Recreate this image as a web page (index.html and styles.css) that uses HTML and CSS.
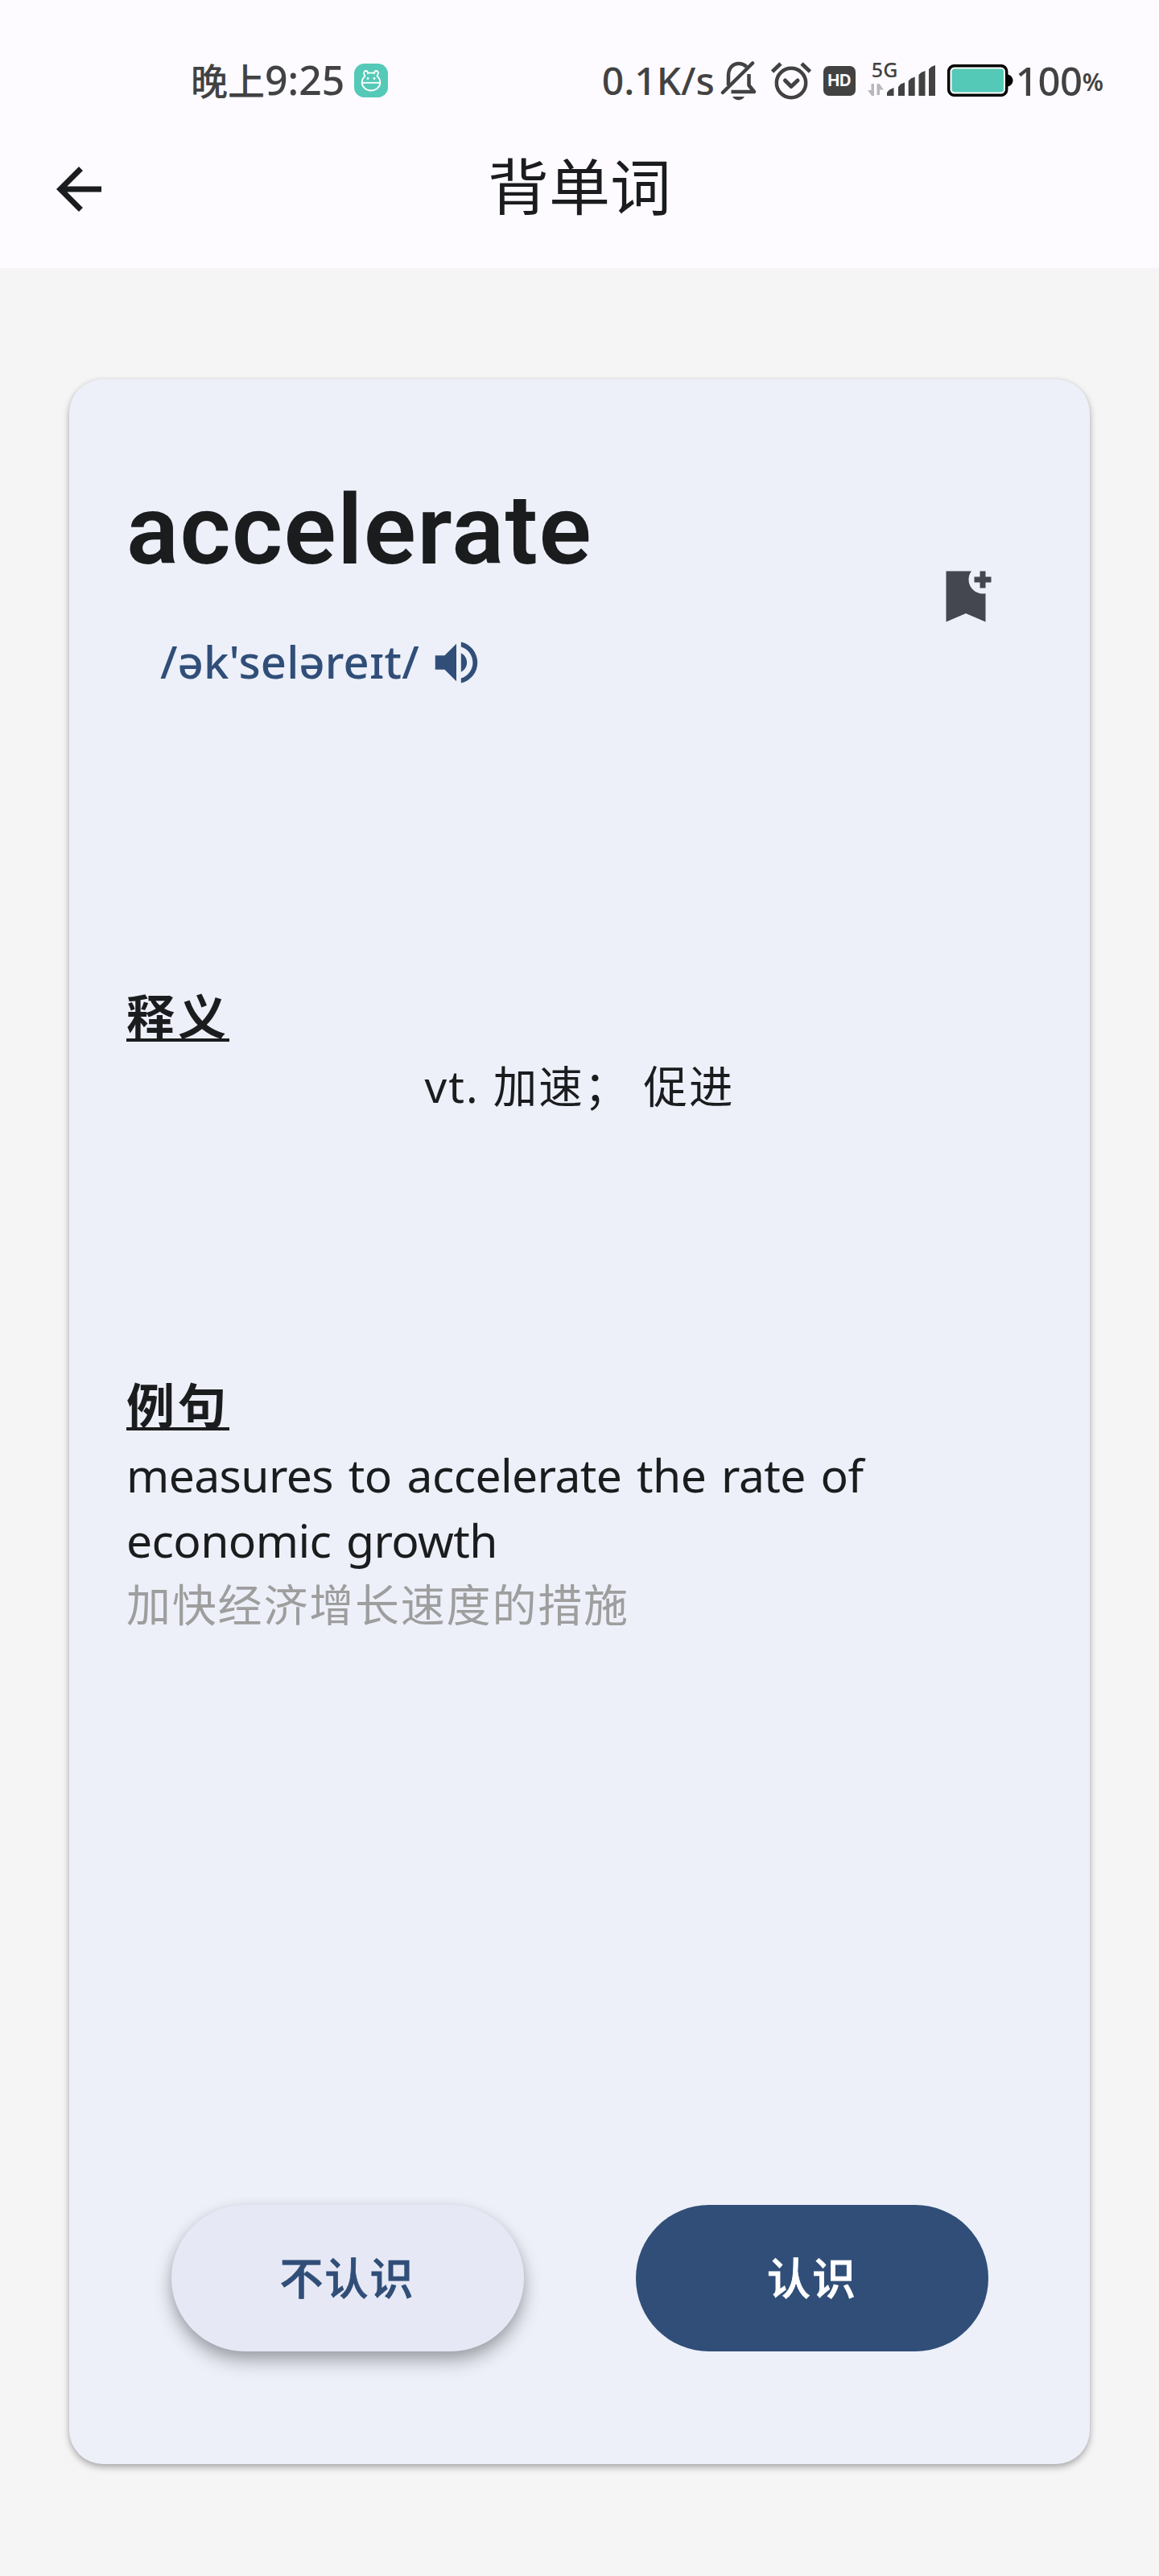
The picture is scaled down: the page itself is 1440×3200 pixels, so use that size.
FILE: index.html
```html
<!DOCTYPE html>
<html lang="zh-CN">
<head>
<meta charset="utf-8">
<title>背单词</title>
<link rel="stylesheet" href="styles.css">
</head>
<body>
<header class="top">
  <div class="status">
    <div class="status-left">
      <span class="clock">晚上<span class="digits">9:25</span></span>
      <svg class="face" viewBox="0 0 42 42"><rect width="42" height="42" rx="12.500" fill="#55c9b7"/><g fill="none" stroke="#fff" stroke-width="1.800"><path d="M13.500 15.500C11 12 12 9 14.500 9c1.800 0 2.500 1.500 2.500 3 2.500-.8 5.500-.8 8 0 0-1.500.7-3 2.500-3 2.500 0 3.500 3 1 6.500 2.500 2.200 3.800 5 3.800 8C32.300 29 27 33.500 21 33.500S9.700 29 9.700 23.500c0-3 1.300-5.800 3.800-8z"/><path d="M10 23.800h22"/></g><circle cx="17" cy="18.500" r="1.400" fill="#fff"/><circle cx="25" cy="18.500" r="1.400" fill="#fff"/></svg>
    </div>
    <div class="status-right">
      <span class="speed">0.1K/s</span>
      <svg class="bell" viewBox="0 0 46 50"><g fill="none" stroke="#424242" stroke-width="4.500"><path d="M10 31V19C10 10 15 4 23 4c4 0 7 1.500 9.500 4"/><path d="M35.500 17v14l6.500 8H13.500" stroke-linejoin="round"/><path d="M3 40 40 3.500" stroke-linecap="round"/></g><path d="M15 45h15c-2 3-4.500 4.200-7.500 4.200S17 48 15 45z" fill="#424242"/></svg>
      <svg class="alarm" viewBox="0 0 52 48"><g fill="none" stroke="#424242" stroke-width="4.500"><circle cx="26" cy="27" r="18.200"/><path d="m18.500 24 7.500 7.500 8-7.500" stroke-width="5" stroke-linecap="round" stroke-linejoin="round"/><path d="M2.500 13 13 3M49.500 13 39 3" stroke-width="4.800"/></g></svg>
      <span class="hd">HD</span>
      <div class="signal">
        <div class="net"><span class="gen">5G</span>
        <svg class="arrows" viewBox="0 0 20 15" fill="#b8b8bb"><path d="M4.500 0H8v15H5L0 8h4.500zM11.500 0h3l5.500 7.500h-5V14h-3.500z"/></svg></div>
        <svg class="bars" viewBox="0 0 60 38" fill="#424242"><path d="M0 34l3-3.500L8.500 28v10H0zM14 27l3-3.500 5-2V38h-8zM26.700 19.500l3-3 5-2V38h-8zM39.500 12l3-3 5-2V38h-8zM52 5l3-3 5-2v38h-8z"/></svg>
      </div>
      <svg class="battery" viewBox="0 0 82 40"><path d="M74 12.500c4 0 7.500 3.500 7.500 7.500s-3.500 7.500-7.500 7.500z"/><rect x="1.700" y="1.700" width="72" height="36.600" rx="7" fill="#fff" stroke="#000" stroke-width="3.500"/><rect x="5.500" y="5.500" width="64.500" height="29" rx="4" fill="#55c9b7"/></svg>
      <span class="level">100</span><span class="percent">%</span>
    </div>
  </div>
  <nav class="bar">
    <svg class="back" viewBox="0 0 24 24" fill="#1b1c1e"><path d="M20 11H7.830l5.590-5.590L12 4l-8 8 8 8 1.410-1.410L7.830 13H20z"/></svg>
    <h1 class="title">背单词</h1>
  </nav>
</header>
<main class="card">
  <section class="head">
    <div class="entry">
      <h2 class="word">accelerate</h2>
      <div class="phonetic"><span class="ipa">/ək'seləreɪt/</span>
      <svg class="speaker" viewBox="0 0 24 24" fill="#304e78"><path d="M3 9v6h4l5 5V4L7 9H3zm13.500 3c0-1.770-1.020-3.290-2.500-4.030v8.050c1.480-.73 2.500-2.250 2.500-4.020zM14 3.230v2.060c2.890.86 5 3.540 5 6.710s-2.110 5.850-5 6.710v2.060c4.010-.91 7-4.490 7-8.770s-2.990-7.860-7-8.770z"/></svg></div>
    </div>
    <svg class="bookmark" viewBox="0 0 24 24" fill="#44474f"><path d="M21 7h-2v2h-2V7h-2V5h2V3h2v2h2zM19 21l-7-3-7 3V3h9c-.63.84-1 1.870-1 3 0 2.760 2.240 5 5 5 .34 0 .68-.03 1-.1z"/></svg>
  </section>
  <section class="meaning">
    <h3 class="label">释义</h3>
    <p class="gloss">vt. 加速； 促进</p>
  </section>
  <section class="example">
    <h3 class="label">例句</h3>
    <p class="sentence">measures to accelerate the rate of<br>economic growth</p>
    <p class="translation">加快经济增长速度的措施</p>
  </section>
  <div class="actions">
    <button class="btn no">不认识</button>
    <button class="btn yes">认识</button>
  </div>
</main>
</body>
</html>
```
FILE: styles.css
```css
* { box-sizing: border-box; }
body {
  margin: 0;
  min-height: 3200px;
  background: #f5f5f5;
  color: #1b1c1e;
  font-family: "Noto Sans", "Noto Sans CJK SC", sans-serif;
}
h1, h2, h3, p { margin: 0; font-weight: 400; }
svg { display: block; flex: none; }
.top { height: 333px; padding-top: 70px; background: #fdfbff; }
.status { display: flex; justify-content: space-between; align-items: center; height: 60px; padding: 0 69px 0 237px; color: #424242; }
.status-left, .status-right { display: flex; align-items: center; }
.clock { font-size: 46px; line-height: 60px; font-weight: 500; white-space: nowrap; }
.digits { font-size: 50px; line-height: 1; }
.face { width: 42px; height: 42px; margin-left: 12px; }
.speed { font-size: 48px; line-height: 60px; font-weight: 500; }
.bell { width: 46px; height: 50px; margin-left: 7px; }
.alarm { width: 52px; height: 48px; margin-left: 16px; }
.hd { width: 40px; height: 37px; margin-left: 14px; border-radius: 7px; background: #424242; color: #fdfbff; font: 700 20px/37px Inter, sans-serif; text-align: center; }
.signal { display: flex; align-items: flex-end; height: 38px; margin-left: 15px; }
.net { width: 24px; }
.gen { display: block; margin: 0 0 5px 5px; font-size: 25px; line-height: 26px; font-weight: 500; }
.arrows { width: 20px; height: 15px; }
.bars { width: 60px; height: 38px; }
.battery { width: 82px; height: 40px; margin-left: 15px; }
.level { font-size: 49px; line-height: 60px; font-weight: 500; margin-left: 3px; letter-spacing: -.4px; }
.percent { font-size: 30px; line-height: 60px; font-weight: 600; margin-top: 4px; }
.bar { display: grid; grid-template-columns: 84px 1fr 84px; align-items: center; height: 120px; margin-top: 45px; padding: 0 56px; }
.back { width: 84px; height: 84px; }
.title { margin-top: -6px; font-size: 76px; line-height: 110px; text-align: center; }
.card {
  display: flex; flex-direction: column;
  width: 1268px; height: 2590px; margin: 138px auto 0; padding: 102px 112px 140px 71px;
  border-radius: 42px; background: #edf0f9;
  box-shadow: 0 4px 9px rgba(0,0,0,.3), 0 0 4px rgba(0,0,0,.06);
}
.head { display: flex; justify-content: space-between; align-items: center; height: 288px; }
.word { font-family: Roboto, "Noto Sans", sans-serif; font-size: 121px; line-height: 172px; height: 160px; font-weight: 600; letter-spacing: 1.400px; }
.phonetic { display: flex; align-items: center; height: 80px; margin: 48px 0 0 42px; color: #304e78; }
.ipa { font-size: 56px; line-height: 80px; font-weight: 500; letter-spacing: .2px; }
.speaker { width: 70px; height: 70px; margin: 3px 0 0 11px; }
.bookmark { width: 84px; height: 84px; margin-top: 47px; }
.meaning { margin-top: 362px; }
.label { font-size: 60px; line-height: 80px; font-weight: 600; letter-spacing: 4px; text-decoration: underline; text-decoration-thickness: 3.500px; text-underline-offset: 4px; text-decoration-skip-ink: none; width: max-content; }
.gloss { margin: 6px -41px 0 0; font-size: 54.500px; line-height: 80px; text-align: center; letter-spacing: 2px; word-spacing: 1px; }
.example { margin-top: 317px; }
.sentence { margin-top: 6px; font-size: 57px; line-height: 81px; letter-spacing: -.6px; word-spacing: 4.600px; white-space: nowrap; }
.translation { margin-top: -2px; font-size: 55px; line-height: 81px; letter-spacing: 1.800px; color: #9e9e9e; }
.actions { display: flex; gap: 139.500px; margin: auto 0 0 55.500px; }
.btn { width: 438px; height: 182px; border: 0; border-radius: 91px; font: 500 54px/80px "Noto Sans", "Noto Sans CJK SC", sans-serif; letter-spacing: 2px; -webkit-text-stroke: .8px currentColor; }
.no { background: #e6e9f5; color: #304e78; box-shadow: 0 12px 22px rgba(0,0,0,.3), 0 3px 14px rgba(0,0,0,.08); }
.yes { background: #304e78; color: #fff; }
```
